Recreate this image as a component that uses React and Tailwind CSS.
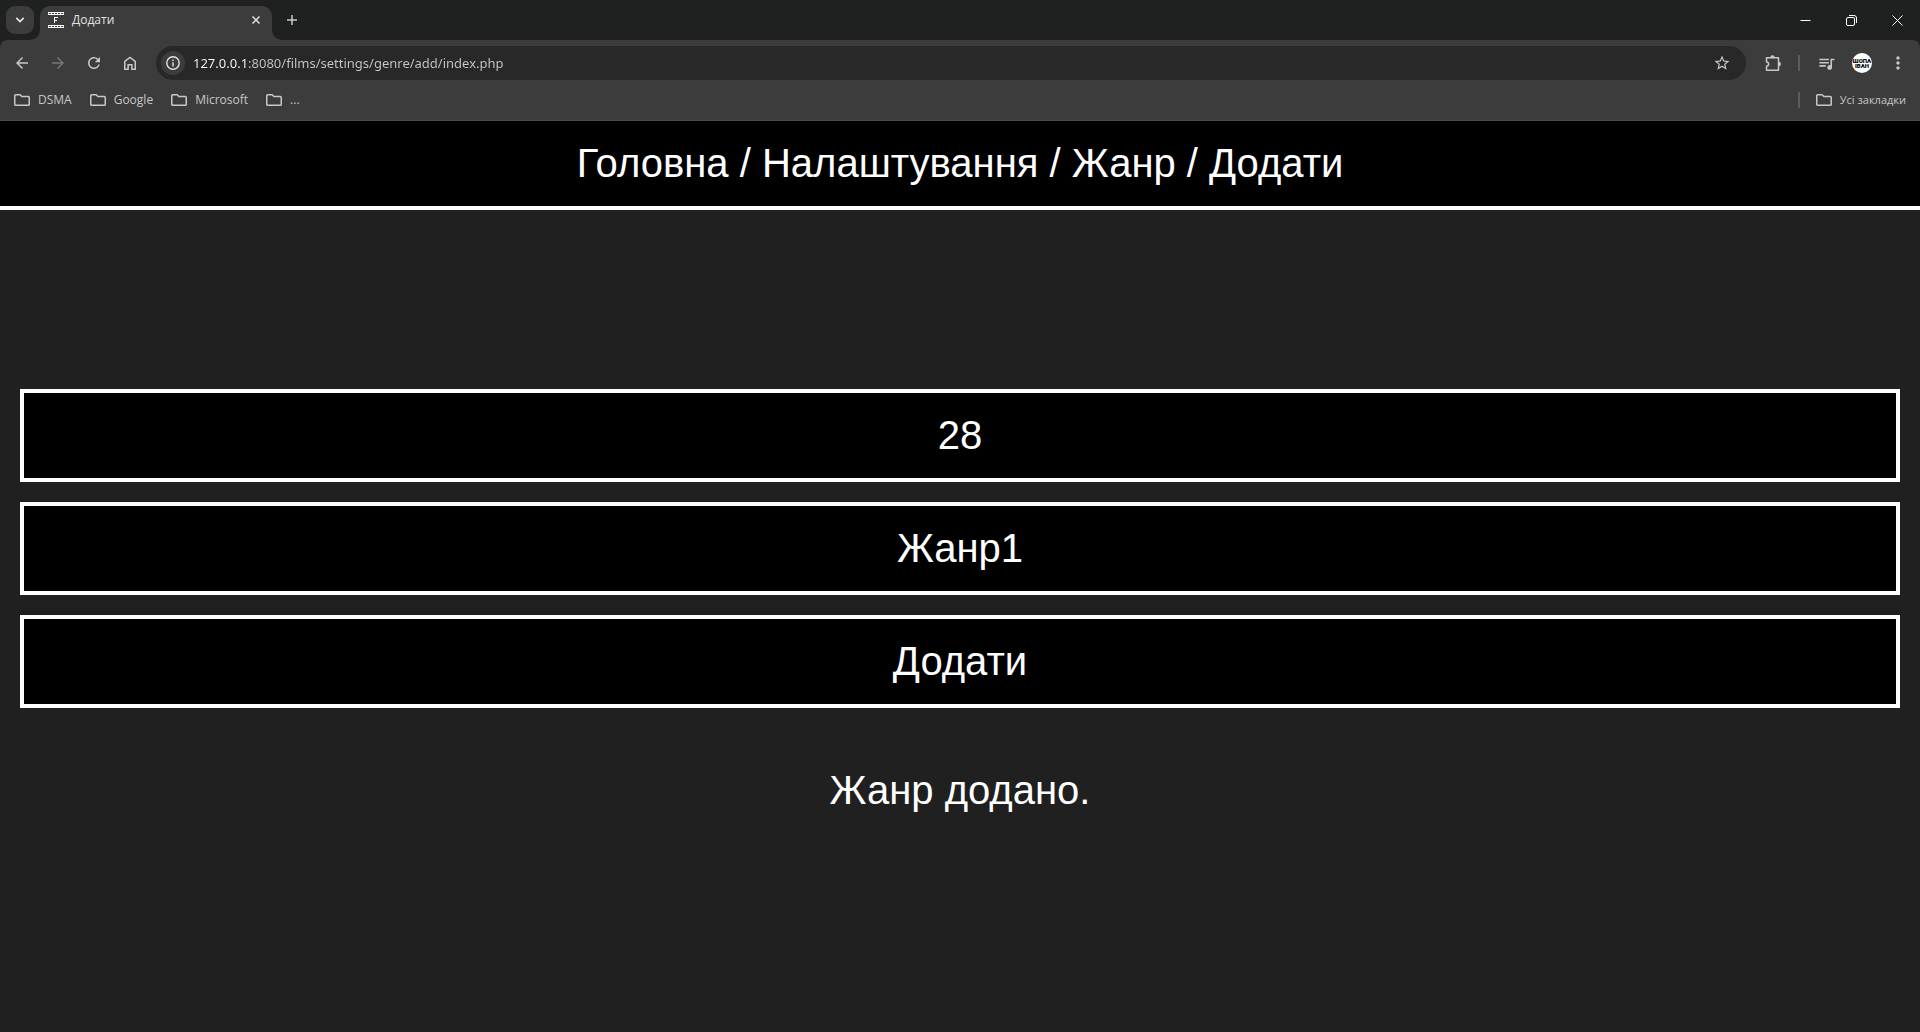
import React from "react";
import {
  MdArrowBack,
  MdArrowForward,
  MdRefresh,
  MdStarBorder,
  MdQueueMusic,
  MdMoreVert,
} from "react-icons/md";

function IconButton({ label, className = "", children }) {
  return (
    <button
      type="button"
      aria-label={label}
      className={`flex size-7 shrink-0 items-center justify-center rounded-full ${className}`}
    >
      {children}
    </button>
  );
}

function FilmIcon() {
  return (
    <svg width="16" height="16" viewBox="0 0 16 16" className="shrink-0" fill="#fff" shapeRendering="crispEdges">
      <path d="M0 0h16v1H0zM0 2h16v1H0zM0 13h16v1H0zM0 15h16v1H0z" />
      <path d="M0 1h1v1H0zM3 1h1v1H3zM6 1h1v1H6zM9 1h1v1H9zM12 1h1v1h-1zM15 1h1v1h-1z" />
      <path d="M0 14h1v1H0zM3 14h1v1H3zM6 14h1v1H6zM9 14h1v1H9zM12 14h1v1h-1zM15 14h1v1h-1z" />
      <path d="M6 5h4v1H7v2h2v1H7v2H6z" />
    </svg>
  );
}

function FolderIcon() {
  return (
    <svg width="16" height="12" viewBox="0 0 16 12" className="shrink-0" fill="none" stroke="currentColor" strokeWidth="1.500" strokeLinejoin="round">
      <path d="M1.600 .75h4.600l1.700 1.700h6.500q.85 0 .85.85v7.100q0 .85-.85.85H1.600q-.85 0-.85-.85V1.600q0-.85.85-.85z" />
    </svg>
  );
}

function Bookmark({ children }) {
  return (
    <a href="#" className="flex items-center gap-2">
      <FolderIcon />
      <span>{children}</span>
    </a>
  );
}

function WindowButton({ label, children }) {
  return (
    <button type="button" aria-label={label} className="flex h-10 w-[46px] items-center justify-center">
      <svg width="11" height="11" viewBox="0 0 11 11" fill="none" stroke="#fff" strokeWidth="1">
        {children}
      </svg>
    </button>
  );
}

function TabStrip() {
  return (
    <div className="flex h-10 items-end bg-[#1f2120]">
      <div className="flex h-10 items-center px-1.5">
        <button type="button" aria-label="Пошук вкладок" className="flex size-7 items-center justify-center rounded-[9px] bg-[#3c3c3c]">
          <svg width="10" height="6" viewBox="0 0 10 6" fill="none" stroke="#e3e3e3" strokeWidth="1.800">
            <path d="M1.300 .9 5 4.600 8.700 .9" />
          </svg>
        </button>
      </div>
      <div className="relative flex h-[34px] w-[232px] items-center rounded-t-[10px] bg-[#3c3c3c] pr-2 pb-1.5 pl-2 text-[#e3e3e3]">
        <svg width="10" height="10" viewBox="0 0 10 10" className="absolute bottom-0 -left-2.5" fill="#3c3c3c">
          <path d="M10 0v10H0A10 10 0 0 0 10 0z" />
        </svg>
        <svg width="10" height="10" viewBox="0 0 10 10" className="absolute -right-2.5 bottom-0" fill="#3c3c3c">
          <path d="M0 0v10h10A10 10 0 0 1 0 0z" />
        </svg>
        <FilmIcon />
        <span className="ml-2 flex-1 text-xs leading-4">Додати</span>
        <button type="button" aria-label="Закрити вкладку" className="flex size-4 items-center justify-center">
          <svg width="8" height="8" viewBox="0 0 8 8" stroke="#e3e3e3" strokeWidth="1.500">
            <path d="M.5 .5l7 7M7.500 .5l-7 7" />
          </svg>
        </button>
      </div>
      <button type="button" aria-label="Нова вкладка" className="ml-1.5 flex h-10 w-7 items-center justify-center">
        <svg width="10" height="10" viewBox="0 0 10 10" stroke="#c7c7c7" strokeWidth="1.500">
          <path d="M5 0v10M0 5h10" />
        </svg>
      </button>
      <div className="ml-auto flex">
        <WindowButton label="Згорнути">
          <path d="M.5 5.500h10" />
        </WindowButton>
        <WindowButton label="Відновити">
          <rect x=".5" y="2.500" width="8" height="8" rx="1.500" />
          <path d="M3 .5h5a2.500 2.500 0 0 1 2.500 2.500v5" />
        </WindowButton>
        <WindowButton label="Закрити">
          <path d="M.5 .5l10 10M10.500 .5l-10 10" />
        </WindowButton>
      </div>
    </div>
  );
}

function Toolbar() {
  return (
    <div className="flex h-[46px] items-center px-2 text-[#c7c7c7]">
      <div className="flex gap-2">
        <IconButton label="Назад"><MdArrowBack size={18} /></IconButton>
        <IconButton label="Вперед" className="text-[#757575]"><MdArrowForward size={18} /></IconButton>
        <IconButton label="Оновити"><MdRefresh size={18} /></IconButton>
        <IconButton label="Головна сторінка">
          <svg width="14" height="14" viewBox="0 0 14 14" fill="none" stroke="currentColor" strokeWidth="1.500">
            <path d="M1.750 13.250V5.400L7 1.400l5.250 4v7.850H8.900V8.750H5.100v4.500H1.750z" />
          </svg>
        </IconButton>
      </div>
      <div className="ml-3 flex h-[34px] flex-1 items-center rounded-full bg-[#282828] pr-2.5 pl-[5px]">
        <button type="button" aria-label="Інформація про сайт" className="flex size-6 shrink-0 items-center justify-center rounded-full bg-[#3c3c3c]">
          <svg width="14" height="14" viewBox="0 0 14 14" fill="none" stroke="#e3e3e3" strokeWidth="1.400">
            <circle cx="7" cy="7" r="6.200" />
            <path d="M7 6.200v4.300M7 3.500v1.500" />
          </svg>
        </button>
        <input
          type="text"
          aria-label="Адресний рядок"
          defaultValue="127.0.0.1:8080/films/settings/genre/add/index.php"
          className="ml-2 h-6 min-w-0 flex-1 bg-[linear-gradient(90deg,#ffffff_55px,#c7c7c7_55px)] bg-clip-text font-['Noto_Sans',sans-serif] text-[13px] leading-5 text-transparent outline-none"
        />
        <IconButton label="Додати до закладок"><MdStarBorder size={18} /></IconButton>
      </div>
      <div className="ml-[13px] flex items-center">
        <IconButton label="Розширення">
          <svg width="17" height="17" viewBox="0 0 17 17" fill="none" stroke="currentColor" strokeWidth="1.500" strokeLinejoin="round">
            <path d="M1.500 2.750h12v12.500h-12v-4.100a2.100 2.100 0 0 0 0-4.200z" />
            <path d="M5.300 2.400a2.200 2.200 0 0 1 4.400 0zM13.800 6.800a2.200 2.200 0 0 1 0 4.400z" fill="currentColor" stroke="none" />
          </svg>
        </IconButton>
        <span className="ml-[11px] h-4 w-0.5 bg-[#5c5c5c]" />
        <IconButton label="Керування медіа" className="ml-3"><MdQueueMusic size={19} /></IconButton>
        <IconButton label="Профіль" className="ml-2">
          <span className="flex size-5 flex-col items-center justify-center rounded-full bg-white font-['Roboto',sans-serif] text-[6px] leading-[5px] font-black text-black">
            <span>ШОПА</span>
            <span>ІВАН</span>
          </span>
        </IconButton>
        <IconButton label="Меню" className="ml-2"><MdMoreVert size={20} /></IconButton>
      </div>
    </div>
  );
}

function BookmarksBar() {
  return (
    <nav aria-label="Закладки" className="flex h-[34px] items-center px-3.5 pb-[7px] text-[#c7c7c7]">
      <div className="flex gap-[18px] text-xs leading-4">
        <Bookmark>DSMA</Bookmark>
        <Bookmark>Google</Bookmark>
        <Bookmark>Microsoft</Bookmark>
        <Bookmark>...</Bookmark>
      </div>
      <div className="ml-auto flex items-center gap-4 text-[11px] leading-4">
        <span className="h-4 w-0.5 bg-[#5c5c5c]" />
        <Bookmark>Усі закладки</Bookmark>
      </div>
    </nav>
  );
}

export default function App() {
  const field =
    "block w-full rounded-none border-4 border-white bg-black p-5 text-center text-[40px] leading-[45px] text-white outline-none";
  return (
    <div className="flex min-h-screen flex-col bg-[#202020]">
      <div className="bg-[#1f2120] font-['Open_Sans','Noto_Sans',sans-serif]">
        <TabStrip />
        <div className="rounded-t-lg border-b border-[#4c4c4c] bg-[#3c3c3c]">
          <Toolbar />
          <BookmarksBar />
        </div>
      </div>
      <div className="flex flex-1 flex-col font-['Liberation_Sans',Arial,sans-serif] text-[40px] leading-[45px] text-white">
        <header className="border-b-4 border-white bg-black p-5 text-center">
          <a href="#">Головна</a> / <a href="#">Налаштування</a> / <a href="#">Жанр</a> / <a href="#">Додати</a>
        </header>
        <main className="flex flex-1 flex-col justify-center">
          <form className="flex flex-col gap-5 p-5" onSubmit={(e) => e.preventDefault()}>
            <input type="text" aria-label="Номер" defaultValue="28" className={field} />
            <input type="text" aria-label="Жанр" defaultValue="Жанр1" className={field} />
            <button type="submit" className={field}>Додати</button>
          </form>
          <p className="mt-10 mb-[60px] text-center">Жанр додано.</p>
        </main>
      </div>
    </div>
  );
}
